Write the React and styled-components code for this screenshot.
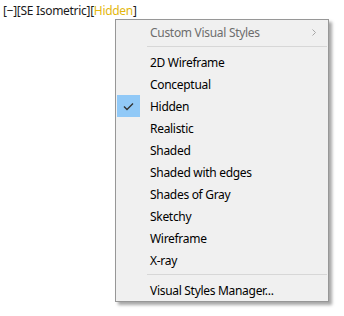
import React from 'react';
import styled, { createGlobalStyle } from 'styled-components';

const Global = createGlobalStyle`
  html, body {
    margin: 0;
    padding: 0;
    background: #ffffff;
  }
  body {
    font-family: "Noto Sans", sans-serif;
    letter-spacing: -0.3px;
  }
`;

const Viewport = styled.div`
  position: relative;
  width: 344px;
  height: 316px;
  background: #ffffff;
  overflow: hidden;
`;

const Label = styled.div`
  padding: 3px 0 0 3px;
  font-size: 12px;
  line-height: 16px;
  color: #1a1a1a;
  white-space: nowrap;
`;

const Active = styled.span`
  color: #e3b70f;
`;

const Menu = styled.div`
  position: absolute;
  left: 115px;
  top: 19px;
  width: 211px;
  padding: 1px 0 0 1px;
  background: #f0f0f0;
  border: 1px solid #979797;
  box-shadow: 3px 3px 3px rgba(0, 0, 0, 0.35);
  display: flex;
  flex-direction: column;
`;

const Item = styled.div`
  display: flex;
  align-items: center;
  height: 22px;
  font-size: 12px;
  color: ${p => (p.disabled ? '#6d6d6d' : '#000000')};
`;

const CheckCell = styled.div`
  width: 23px;
  height: 22px;
  margin-right: 10px;
  display: flex;
  align-items: center;
  justify-content: center;
  background: ${p => (p.checked ? '#91c9f7' : 'transparent')};
`;

const Text = styled.span`
  flex: 1;
`;

const ArrowCell = styled.span`
  width: 16px;
  display: flex;
  align-items: center;
`;

const Separator = styled.div`
  height: 1px;
  margin: 3px 1px 4px 30px;
  background: #d7d7d7;
`;

const Check = () => (
  <svg width="11" height="9" viewBox="0 0 11 9">
    <path d="M1 4.5 L4 7.5 L10 1.5" fill="none" stroke="#333" strokeWidth="1.4" />
  </svg>
);

const Chevron = () => (
  <svg width="4" height="7" viewBox="0 0 4 7">
    <path d="M0.5 0.5 L3.5 3.5 L0.5 6.5" fill="none" stroke="#a6a6a6" strokeWidth="1" />
  </svg>
);

const styles = [
  '2D Wireframe',
  'Conceptual',
  'Hidden',
  'Realistic',
  'Shaded',
  'Shaded with edges',
  'Shades of Gray',
  'Sketchy',
  'Wireframe',
  'X-ray',
];

export default function App() {
  return (
    <Viewport>
      <Global />
      <Label>
        [−][SE Isometric][<Active>Hidden</Active>]
      </Label>
      <Menu>
        <Item disabled>
          <CheckCell />
          <Text>Custom Visual Styles</Text>
          <ArrowCell><Chevron /></ArrowCell>
        </Item>
        <Separator />
        {styles.map(s => (
          <Item key={s}>
            <CheckCell checked={s === 'Hidden'}>{s === 'Hidden' && <Check />}</CheckCell>
            <Text>{s}</Text>
          </Item>
        ))}
        <Separator />
        <Item>
          <CheckCell />
          <Text>Visual Styles Manager...</Text>
        </Item>
      </Menu>
    </Viewport>
  );
}
